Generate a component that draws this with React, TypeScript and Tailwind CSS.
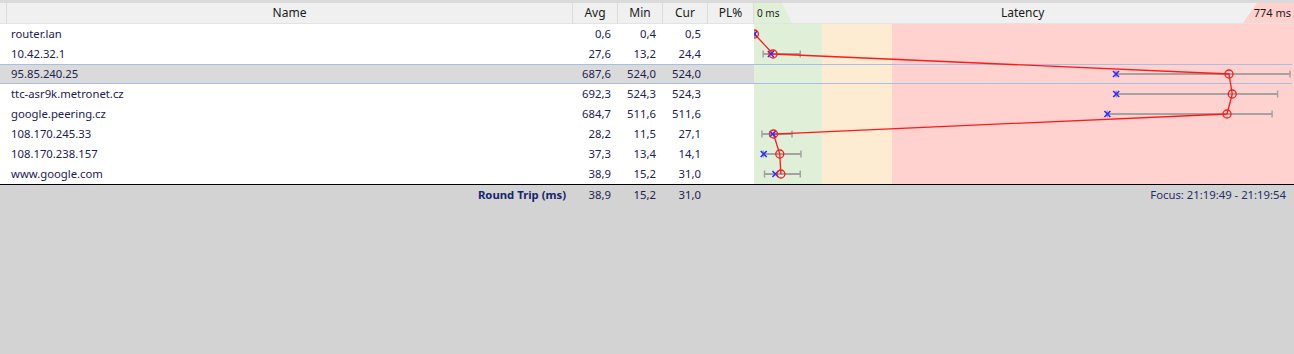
type Hop = {
  name: string;
  avg: number;
  min: number;
  cur: number;
  max: number;
  selected?: boolean;
};

const hops: Hop[] = [
  { name: "router.lan", avg: 0.6, min: 0.4, cur: 0.5, max: 1 },
  { name: "10.42.32.1", avg: 27.6, min: 13.2, cur: 24.4, max: 67 },
  { name: "95.85.240.25", avg: 687.6, min: 524.0, cur: 524.0, max: 776, selected: true },
  { name: "ttc-asr9k.metronet.cz", avg: 692.3, min: 524.3, cur: 524.3, max: 758 },
  { name: "google.peering.cz", avg: 684.7, min: 511.6, cur: 511.6, max: 750 },
  { name: "108.170.245.33", avg: 28.2, min: 11.5, cur: 27.1, max: 55 },
  { name: "108.170.238.157", avg: 37.3, min: 13.4, cur: 14.1, max: 68 },
  { name: "www.google.com", avg: 38.9, min: 15.2, cur: 31.0, max: 67 },
];

const fmt = (n: number) => n.toFixed(1).replace(".", ",");

// px per ms on the latency chart (0 .. 774 ms)
const SCALE = 0.6908;
const sx = (ms: number) => ms * SCALE;
const cy = (i: number) => 10 + i * 20;

const font = { fontFamily: '"Noto Sans", "Open Sans", sans-serif' };

export default function App() {
  return (
    <div className="w-[1294px] h-[354px] bg-[#d3d3d3] text-[11.3px] overflow-hidden" style={font}>
      {/* top strip */}
      <div className="h-[3px] bg-[#dadada]" />

      {/* Header */}
      <div className="flex h-[21px] bg-[#f0f0f0] border-b border-[#e3e3e3] text-[#1a1a1a] text-[12px]">
        <div className="w-[7px] border-r border-[#dcdcdc]" />
        <div className="w-[566px] border-r border-[#dcdcdc] flex items-center justify-center">Name</div>
        <div className="w-[45px] border-r border-[#dcdcdc] flex items-center justify-center">Avg</div>
        <div className="w-[45px] border-r border-[#dcdcdc] flex items-center justify-center">Min</div>
        <div className="w-[45px] border-r border-[#dcdcdc] flex items-center justify-center">Cur</div>
        <div className="w-[46px] border-r border-[#dcdcdc] flex items-center justify-center">PL%</div>
        <div className="relative w-[540px] flex items-center justify-between px-[3px]">
          <svg className="absolute inset-0" width="540" height="20">
            <polygon points="0,0 28,0 38,20 0,20" fill="#e0efd8" />
            <polygon points="503,0 540,0 540,20 489,20" fill="#ffd2d0" />
          </svg>
          <span className="relative text-[10px]">0 ms</span>
          <span className="relative pl-[12px]">Latency</span>
          <span className="relative text-[11px]">774 ms</span>
        </div>
      </div>

      {/* Rows */}
      <div className="relative bg-white border-b border-black">
        {hops.map((h) => (
          <div
            key={h.name}
            className={`flex h-5 text-[#1c2150] ${
              h.selected ? "bg-[#dadada] border-y border-[#a6bfe6] rounded-r-[3px]" : ""
            }`}
          >
            <div className="w-[573px] pl-[11px] flex items-center">{h.name}</div>
            <div className="w-[45px] pr-[7px] flex items-center justify-end">{fmt(h.avg)}</div>
            <div className="w-[45px] pr-[7px] flex items-center justify-end">{fmt(h.min)}</div>
            <div className="w-[45px] pr-[7px] flex items-center justify-end">{fmt(h.cur)}</div>
            <div className="w-[46px]" />
            <div className="w-[540px] bg-[linear-gradient(to_right,#e0efd8_0px,#e0efd8_68px,#fdecd1_68px,#fdecd1_138px,#ffd2d0_138px)]" />
          </div>
        ))}

        {/* latency drawing */}
        <svg className="absolute top-0 right-0 pointer-events-none" width="540" height="160">
          {hops.map((h, i) => (
            <g key={h.name} stroke="#a3a3a3" strokeWidth="2">
              <line x1={sx(h.min)} y1={cy(i)} x2={sx(h.max)} y2={cy(i)} />
              <line x1={sx(h.min)} y1={cy(i) - 3.5} x2={sx(h.min)} y2={cy(i) + 3.5} strokeWidth="1.5" />
              <line x1={sx(h.max)} y1={cy(i) - 3.5} x2={sx(h.max)} y2={cy(i) + 3.5} strokeWidth="1.5" />
            </g>
          ))}
          <polyline
            points={hops.map((h, i) => `${sx(h.avg)},${cy(i)}`).join(" ")}
            fill="none"
            stroke="#ff1a1a"
            strokeWidth="1.3"
          />
          {hops.map((h, i) => (
            <g key={h.name + "-m"}>
              <path
                d={`M${sx(h.cur) - 3} ${cy(i) - 3} L${sx(h.cur) + 3} ${cy(i) + 3} M${sx(h.cur) + 3} ${cy(i) - 3} L${sx(h.cur) - 3} ${cy(i) + 3}`}
                stroke="#2b2bff"
                strokeWidth="1.6"
              />
              <circle cx={sx(h.avg)} cy={cy(i)} r="4" fill="none" stroke="#ff1a1a" strokeWidth="1.3" />
            </g>
          ))}
        </svg>
      </div>

      {/* Footer */}
      <div className="flex h-5 text-[#1c2150]">
        <div className="w-[573px] pr-[7px] flex items-center justify-end font-bold text-[#14266b]">Round Trip (ms)</div>
        <div className="w-[45px] pr-[7px] flex items-center justify-end">38,9</div>
        <div className="w-[45px] pr-[7px] flex items-center justify-end">15,2</div>
        <div className="w-[45px] pr-[7px] flex items-center justify-end">31,0</div>
        <div className="w-[46px]" />
        <div className="w-[540px] pr-[8px] flex items-center justify-end text-[#1f2d6a]">Focus: 21:19:49 - 21:19:54</div>
      </div>
    </div>
  );
}
